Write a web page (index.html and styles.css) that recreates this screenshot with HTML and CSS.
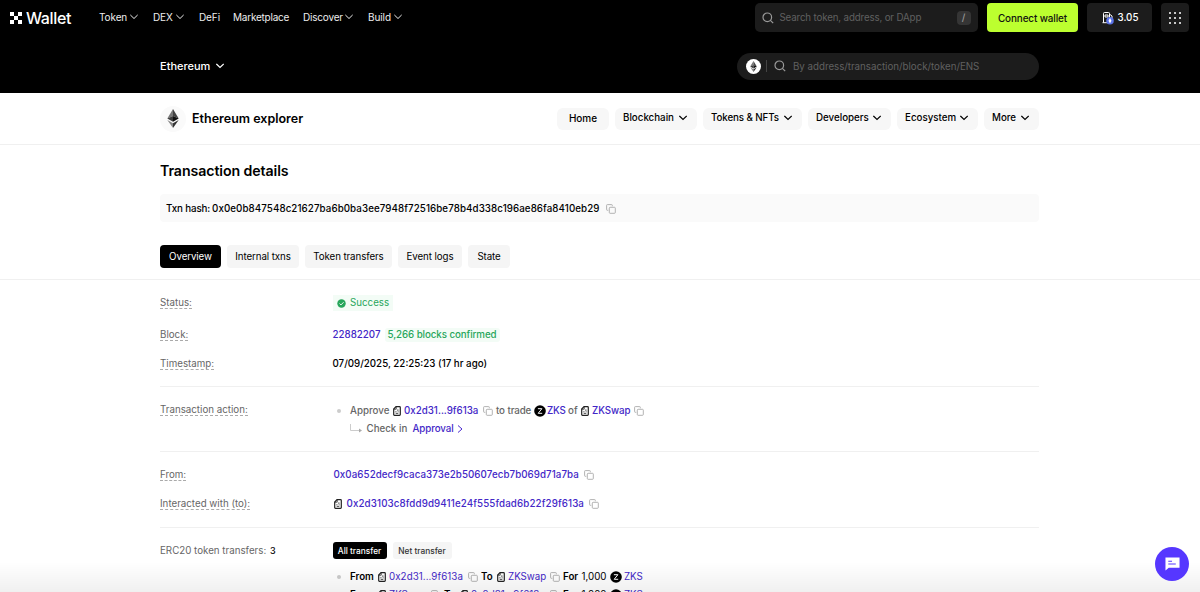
FILE: index.html
```html
<!DOCTYPE html>
<html lang="en">
<head>
<meta charset="utf-8">
<title>Ethereum explorer</title>
<link rel="stylesheet" href="styles.css">
</head>
<body>
<svg class="defs" aria-hidden="true">
  <symbol id="chev" viewBox="0 0 8 8"><path d="M.7 2.300 4 5.500l3.300-3.200" fill="none" stroke="currentColor" stroke-width="var(--sw, 1)" stroke-linecap="square"/></symbol>
  <symbol id="search" viewBox="0 0 12 12"><circle cx="5.300" cy="5.300" r="4.300" fill="none" stroke="currentColor" stroke-width="1.200"/><path d="m8.400 8.400 2.800 2.800" stroke="currentColor" stroke-width="1.200"/></symbol>
  <symbol id="copy" viewBox="0 0 10 10"><path d="M2.300 6.300H1.300Q.6 6.300.6 5.600V1.300Q.6.6 1.300.6h4.300q.7 0 .7.700v1" fill="none" stroke="currentColor" stroke-width=".9"/><rect x="3.300" y="3.300" width="6" height="6" rx=".8" fill="none" stroke="currentColor" stroke-width=".9"/></symbol>
  <symbol id="doc" viewBox="0 0 8 10"><path d="M3 .7h3.500q.8 0 .8.800v7q0 .8-.8.800h-5q-.8 0-.8-.8V3z" fill="none" stroke="currentColor" stroke-width="1.200"/><path d="M.8 3.200h2.400V.8M4 4.100h1.600M2.300 5.800h1.200M4.700 5.800h.9M2.700 7.400h2.600" fill="none" stroke="currentColor" stroke-width=".8"/></symbol>
  <symbol id="zks" viewBox="0 0 12 12"><circle cx="6" cy="6" r="5.800" fill="#000"/><path d="M3.900 3.700h4L4.200 8.300h4" fill="none" stroke="#fff" stroke-width="1"/></symbol>
  <symbol id="eth" viewBox="0 0 12 20"><path d="M6 0 0 10l6-2.700z" fill="#777"/><path d="m6 0 6 10-6-2.700z" fill="#444"/><path d="m0 10 6-2.700v6.200z" fill="#3c3c3c"/><path d="m12 10-6-2.700v6.200z" fill="#111"/><path d="m0 11.500 6 3.600V20z" fill="#888"/><path d="m12 11.500-6 3.600V20z" fill="#333"/></symbol>
</svg>

<header class="masthead">
  <div class="topbar">
    <a class="brand"><svg class="brand-mark" viewBox="0 0 12 12"><path d="M0 0h4v4H0zM8 0h4v4H8zM4 4h4v4H4zM0 8h4v4H0zM8 8h4v4H8z" fill="#fff"/></svg><span>Wallet</span></a>
    <nav class="mainnav">
      <a class="n-token">Token<svg class="chev"><use href="#chev"/></svg></a>
      <a class="n-dex">DEX<svg class="chev"><use href="#chev"/></svg></a>
      <a class="n-defi">DeFi</a>
      <a class="n-market">Marketplace</a>
      <a class="n-discover">Discover<svg class="chev"><use href="#chev"/></svg></a>
      <a class="n-build">Build<svg class="chev"><use href="#chev"/></svg></a>
    </nav>
    <div class="search"><svg class="glass"><use href="#search"/></svg><span class="hint">Search token, address, or DApp</span><kbd>/</kbd></div>
    <button class="connect">Connect wallet</button>
    <button class="gas"><svg class="pump" viewBox="0 0 12 14"><path d="M1.500 11.500V2.500q0-1 1-1h4q1 0 1 1v9M.5 11.700h7M3 4h3v2H3zM8 3.500l2 1.500v4" fill="none" stroke="#fff"/><circle cx="8" cy="9.800" r="3.800" fill="#5b73e8"/><path d="m8 7-1.500 2.800L8 12.500l1.500-2.700z" fill="#fff"/></svg>3.05</button>
    <button class="apps"><svg viewBox="0 0 12 12"><path d="M1 1h.01M6 1h.01M11 1h.01M1 6h.01M6 6h.01M11 6h.01M1 11h.01M6 11h.01M11 11h.01" stroke="#fff" stroke-width="2" stroke-linecap="round"/></svg></button>
  </div>
  <div class="chainbar">
    <a class="chain">Ethereum<svg class="chev"><use href="#chev"/></svg></a>
    <div class="chain-search"><span class="coin"><svg><use href="#eth"/></svg></span><i></i><svg class="glass"><use href="#search"/></svg><span class="hint">By address/transaction/block/token/ENS</span></div>
  </div>
</header>

<div class="explorer">
  <span class="explorer-logo"><svg><use href="#eth"/></svg></span>
  <h2>Ethereum explorer</h2>
  <nav class="pills">
    <a class="p-home">Home</a>
    <a class="p-block">Blockchain<svg class="chev"><use href="#chev"/></svg></a>
    <a class="p-tokens">Tokens &amp; NFTs<svg class="chev"><use href="#chev"/></svg></a>
    <a class="p-dev">Developers<svg class="chev"><use href="#chev"/></svg></a>
    <a class="p-eco">Ecosystem<svg class="chev"><use href="#chev"/></svg></a>
    <a class="p-more">More<svg class="chev"><use href="#chev"/></svg></a>
  </nav>
</div>

<main>
  <h1>Transaction details</h1>
  <div class="hash"><span class="hash-label">Txn hash:</span><span class="hash-value">0x0e0b847548c21627ba6b0ba3ee7948f72516be78b4d338c196ae86fa8410eb29</span><svg class="copy"><use href="#copy"/></svg></div>
  <nav class="tabs">
    <a class="t-overview active">Overview</a><a class="t-internal">Internal txns</a><a class="t-transfers">Token transfers</a><a class="t-logs">Event logs</a><a class="t-state">State</a>
  </nav>
</main>

<section class="details">
  <div class="group overview">
    <div class="row r-status"><div class="label"><span>Status:</span></div><div class="value"><span class="success"><svg viewBox="0 0 10 10"><circle cx="5" cy="5" r="4.700" fill="#27a65b"/><path d="m2.800 5 1.600 1.600 2.900-3" fill="none" stroke="#fff"/></svg>Success</span></div></div>
    <div class="row r-block"><div class="label"><span>Block:</span></div><div class="value"><a class="block-no">22882207</a><span class="confirmed">5,266 blocks confirmed</span></div></div>
    <div class="row r-time"><div class="label"><span>Timestamp:</span></div><div class="value time">07/09/2025, 22:25:23 (17 hr ago)</div></div>
  </div>
  <div class="group action">
    <div class="row"><div class="label"><span>Transaction action:</span></div><div class="value">
      <div class="line muted"><i class="bullet"></i><span class="w-approve">Approve</span><svg class="doc"><use href="#doc"/></svg><a class="w-addr">0x2d31...9f613a</a><svg class="copy"><use href="#copy"/></svg><span class="w-trade">to trade</span><svg class="zks"><use href="#zks"/></svg><a class="w-zks">ZKS</a><span class="w-of">of</span><svg class="doc"><use href="#doc"/></svg><a class="w-swap">ZKSwap</a><svg class="copy"><use href="#copy"/></svg></div>
      <div class="line muted sub"><svg class="elbow" viewBox="0 0 12 10"><path d="M.5 0v6.500H10" fill="none" stroke="#ccc"/><path d="M9 4.500v4l3-2z" fill="#aaa"/></svg><span class="w-check">Check in</span><a class="w-approval">Approval</a><svg class="next" viewBox="0 0 6 10"><path d="m1 1.500 4 3.500-4 3.500" fill="none" stroke="#4b2bcf"/></svg></div>
    </div></div>
  </div>
  <div class="group parties">
    <div class="row"><div class="label"><span>From:</span></div><div class="value inset"><a class="addr-from">0x0a652decf9caca373e2b50607ecb7b069d71a7ba</a><svg class="copy"><use href="#copy"/></svg></div></div>
    <div class="row"><div class="label"><span>Interacted with (to):</span></div><div class="value inset"><svg class="doc"><use href="#doc"/></svg><a class="addr-to">0x2d3103c8fdd9d9411e24f555fdad6b22f29f613a</a><svg class="copy"><use href="#copy"/></svg></div></div>
  </div>
  <div class="group transfers">
    <div class="row"><div class="label plain"><span>ERC20 token transfers:</span><b>3</b></div><div class="value"><a class="seg on">All transfer</a><a class="seg">Net transfer</a></div></div>
    <div class="line transfer"><i class="bullet"></i><b class="w-from">From</b><svg class="doc"><use href="#doc"/></svg><a class="w-addr2">0x2d31...9f613a</a><svg class="copy"><use href="#copy"/></svg><b class="w-to">To</b><svg class="doc"><use href="#doc"/></svg><a class="w-swap2">ZKSwap</a><svg class="copy"><use href="#copy"/></svg><b class="w-for">For</b><span class="w-amount">1,000</span><svg class="zks"><use href="#zks"/></svg><a class="w-end">ZKS</a></div>
    <div class="line transfer"><i class="bullet"></i><b class="w-from">From</b><svg class="doc"><use href="#doc"/></svg><a class="w-swap2">ZKSwap</a><svg class="copy"><use href="#copy"/></svg><b class="w-to">To</b><svg class="doc"><use href="#doc"/></svg><a class="w-addr2">0x2d31...9f613a</a><svg class="copy"><use href="#copy"/></svg><b class="w-for">For</b><span class="w-amount">1,000</span><svg class="zks"><use href="#zks"/></svg><a class="w-end">ZKS</a></div>
  </div>
</section>
<div class="fade"></div>
<button class="chat"><svg viewBox="0 0 16 14"><path d="M.5 0h15v11H4L.5 14z" fill="#fff"/><path d="M3.500 4h4M3.500 7h8" stroke="#5637ff" stroke-width="1.200"/></svg></button>
</body>
</html>
```
FILE: styles.css
```css
* { box-sizing: border-box; }
body { margin: 0; height: 592px; overflow: hidden; background: #fff; color: #000; font: 500 9.750px/14px Inter, "Liberation Sans", sans-serif; white-space: nowrap; }
h1, h2 { margin: 0; font-weight: 600; }
button { border: 0; padding: 0; margin: 0; font: inherit; color: inherit; display: flex; align-items: center; justify-content: center; }
svg { display: block; flex: none; }
.defs { position: absolute; width: 0; height: 0; }
.chev { width: 8px; height: 8px; }
.copy { width: 10px; height: 10px; color: #aaa; }
.doc { width: 8px; height: 10px; color: #222; }
.zks { width: 12px; height: 12px; }
.glass { width: 12px; height: 12px; color: #9a9a9a; }

.masthead { height: 93px; background: #000; color: #fff; }
.topbar { height: 35px; display: flex; align-items: center; padding-left: 10px; }
.brand { display: flex; align-items: center; gap: 4px; width: 89px; font-size: 16px; letter-spacing: -.35px; line-height: 20px; }
.brand-mark { width: 12px; height: 12px; }
.mainnav { display: flex; width: 655.500px; font-weight: 400; color: #eee; font-size: 10px; letter-spacing: -.1px; padding-bottom: 1px; }
.mainnav a { display: flex; align-items: center; justify-content: space-between; }
.n-token { width: 39px; margin-right: 15px; }
.n-dex { width: 31px; margin-right: 15px; }
.n-defi { width: 34px; }
.n-market { width: 70px; letter-spacing: -.22px; }
.n-discover { width: 50px; margin-right: 15px; letter-spacing: -.2px; }
.n-build { width: 34px; }
.search { width: 223px; height: 29px; border-radius: 5px; background: #1c1c1c; display: flex; align-items: center; padding: 0 7px; margin-right: 9.500px; }
.hint { color: #606060; font-weight: 400; flex: 1; padding-left: 6px; }
.search .hint { letter-spacing: -.15px; }
.chain-search .hint { letter-spacing: -.02px; padding: 1px 0 0 7px; }
kbd { width: 14px; height: 14px; border-radius: 4px; background: #353535; color: #999; text-align: center; font: inherit; }
.connect { width: 91px; height: 29px; border-radius: 4px; background: #bcff2f; color: #111; margin-right: 9px; letter-spacing: -.1px; font-size: 9.900px; }
.gas { width: 65px; height: 29px; border-radius: 4px; background: #1c1c1c; gap: 4px; margin-right: 9px; padding-left: 1px; }
.pump { width: 12px; height: 14px; }
.apps { width: 28px; height: 29px; border-radius: 4px; background: #1c1c1c; }
.apps svg { width: 12px; height: 12px; }
.chainbar { height: 58px; display: flex; align-items: center; justify-content: space-between; padding: 4px 161px 0 160px; }
.chain { display: flex; align-items: center; justify-content: space-between; width: 64px; font-size: 11px; --sw: 1.200; }
.chain-search { width: 302px; height: 27px; border-radius: 14px; background: #1c1c1c; display: flex; align-items: center; padding-left: 9px; }
.coin { width: 15px; height: 15px; border-radius: 50%; background: #fff; display: flex; align-items: center; justify-content: center; }
.coin svg { width: 7px; height: 11px; }
.chain-search i { width: 1px; height: 12px; background: #444; margin: 0 7px 0 5px; }

.explorer { height: 52px; border-bottom: 1px solid #f0f0f0; display: flex; align-items: center; padding: 0 161px 0 160px; }
.explorer-logo { width: 26px; height: 26px; border-radius: 50%; background: #fafafa; display: flex; align-items: center; justify-content: center; margin-right: 6px; }
.explorer-logo svg { width: 12px; height: 19px; }
h2 { font-size: 12.500px; flex: 1; }
.pills { display: flex; gap: 6px; }
.pills a { height: 22px; border-radius: 6px; background: #f7f7f7; display: flex; align-items: center; justify-content: space-between; padding: 0 10px 1px 8px; --sw: 1.200; }
.pills .p-home { width: 52px; justify-content: center; padding: 0 0 2px; font-size: 10px; }
.p-block { width: 82px; }
.pills .p-tokens { width: 99px; letter-spacing: -.1px; }
.p-dev { width: 83px; }
.p-eco { width: 81px; }
.p-more { width: 55px; }

main { height: 135px; padding: 16px 161px 0 160px; border-bottom: 1px solid #f0f0f0; }
h1 { font-size: 14.200px; line-height: 20px; letter-spacing: -.1px; }
.hash { height: 28px; margin-top: 13px; border-radius: 4px; background: #fafafa; display: flex; align-items: center; padding: 1px 0 0 6px; }
.hash-label { width: 46px; letter-spacing: -.12px; }
.hash-value { width: 394px; letter-spacing: .085px; }
.tabs { display: flex; gap: 6px; margin-top: 23px; }
.tabs a { height: 23px; border-radius: 4px; background: #f5f5f5; display: flex; align-items: center; justify-content: center; font-weight: 400; padding-top: 1px; letter-spacing: -.1px; }
.tabs .active { background: #000; color: #fff; }
.t-overview { width: 61px; }
.t-internal { width: 72px; }
.t-transfers { width: 87px; }
.t-logs { width: 64px; }
.t-state { width: 42px; }

.details { padding: 0 161px 0 160px; }
.details a { color: #4327c7; }
.group { border-bottom: 1px solid #f0f0f0; }
.row { display: flex; }
.label { width: 172.500px; color: #666; font-weight: 400; }
.label span { display: inline-block; line-height: 12px; height: 12px; border-bottom: 1px dashed #aaa; }
.label.plain span { border: 0; line-height: 14px; height: 14px; width: 110px; }
.label b { font-size: 9px; font-weight: 500; color: #000; }
.value { display: flex; align-items: center; }
.overview { height: 107px; padding-top: 16px; }
.r-status { height: 32px; }
.r-status .value, .r-block .value { height: 14px; }
.r-block { height: 29px; }
.success { display: flex; align-items: center; gap: 4.500px; height: 16px; padding: 0 4px; background: #f3fcf6; color: #27a65b; font-weight: 400; }
.success svg { width: 9px; height: 9px; }
.block-no { width: 52px; }
.confirmed { color: #27a65b; background: #f3fcf6; padding: 0 3px; border-radius: 3px; letter-spacing: -.08px; }
.time { height: 14px; }
.action { height: 65px; padding-top: 16px; }
.action .value { display: block; }
.line { display: flex; align-items: center; height: 18px; }
.action .line { margin-top: -1px; margin-bottom: 1px; }
.muted { color: #666; }
.bullet { width: 4px; height: 4px; border-radius: 50%; background: #ccc; margin: 0 9.500px 0 4px; }
.line .doc { margin-right: 3px; }
.w-approve { width: 43px; }
.w-addr { width: 79px; }
.line .copy { margin-right: 3px; }
.w-trade { width: 38px; letter-spacing: -.1px; }
.w-zks { width: 22px; padding-left: 1px; letter-spacing: -.2px; }
.w-of { width: 13px; }
.w-swap { width: 42px; letter-spacing: -.05px; }
.action .sub { padding-left: 17px; margin-top: -1px; }
.elbow { width: 12px; height: 10px; margin-right: 5px; }
.w-check { width: 46px; }
.w-approval { width: 44.500px; letter-spacing: -.1px; }
.next { width: 6px; height: 10px; }
.parties { height: 76px; padding-top: 16px; }
.parties .row { height: 29px; }
.parties .value { height: 14px; }
.inset { padding-left: 1px; }
.addr-from { width: 250px; letter-spacing: .07px; }
.inset .doc { margin-right: 5px; }
.addr-to { width: 242px; letter-spacing: .12px; }
.transfers { border: 0; padding-top: 13px; }
.transfers .row { height: 27px; }
.transfers .label { padding-top: 3px; }
.transfers .value { height: 19px; gap: 6px; }
.seg { height: 17px; width: 59px; border-radius: 3px; display: flex; align-items: center; justify-content: center; background: #f5f5f5; font-size: 8.300px; }
.details .seg { color: #333; }
.details .seg.on { width: 54px; background: #000; color: #fff; }
.transfer { padding-left: 172.500px; font-weight: 400; }
.transfer b { font-weight: 600; }
.w-from { width: 28px; }
.w-addr2 { width: 79px; letter-spacing: .07px; }
.w-to { width: 16px; }
.w-swap2 { width: 42px; }
.w-for { width: 18.500px; }
.w-amount { width: 28.500px; }
.w-end { padding-left: 2px; letter-spacing: -.1px; }
.fade { position: absolute; left: 0; right: 0; bottom: 0; height: 30px; background: linear-gradient(rgba(0,0,0,0), rgba(0,0,0,.06)); }
.chat { position: absolute; left: 1155px; top: 547px; width: 34px; height: 34px; border-radius: 50%; background: #5637ff; }
.chat svg { width: 15px; height: 14px; }
```
